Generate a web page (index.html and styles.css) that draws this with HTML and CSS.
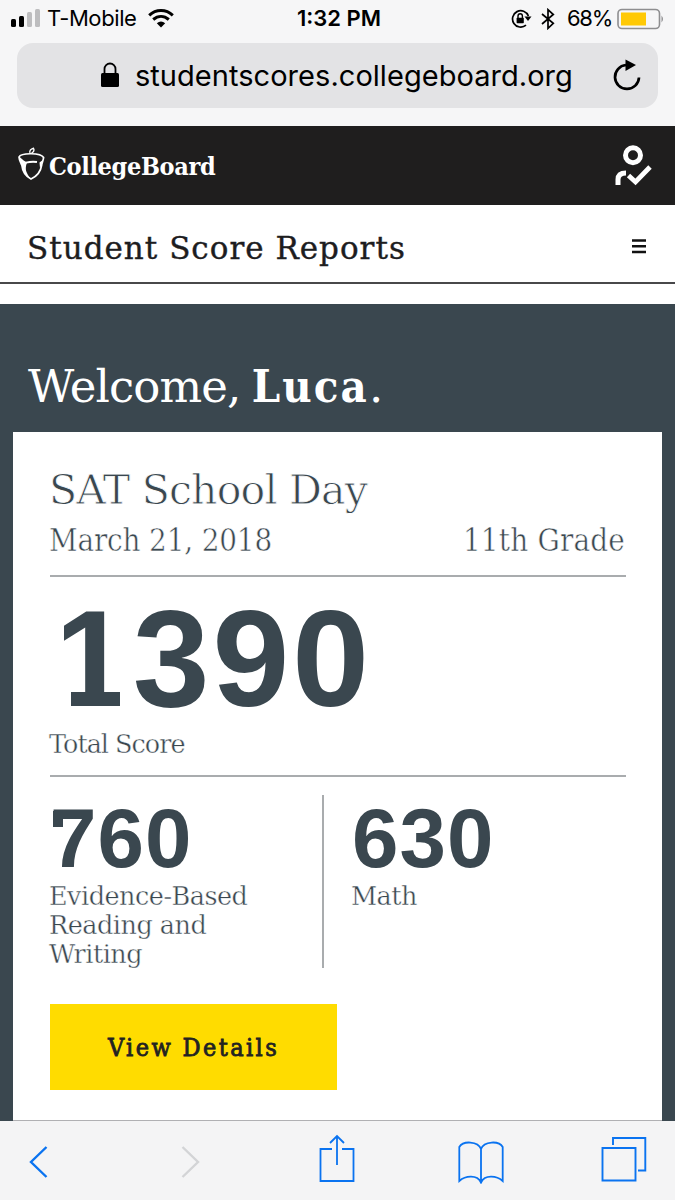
FILE: index.html
```html
<!DOCTYPE html>
<html lang="en">
<head>
<meta charset="utf-8">
<title>Student Score Reports</title>
<link rel="stylesheet" href="styles.css">
</head>
<body>
<div class="screen">
  <header class="browser">
    <div class="status">
      <div class="status-left">
        <svg class="signal" width="32" height="20" viewBox="0 0 32 20"><rect x="1" y="11" width="5" height="8" rx="1.5"/><rect x="9" y="8" width="5" height="11" rx="1.5"/><g fill="#bdbdbf"><rect x="17" y="4" width="5" height="15" rx="1.5"/><rect x="25" y="1" width="5" height="18" rx="1.5"/></g></svg>
        <span class="carrier">T-Mobile</span>
        <svg width="26" height="20" viewBox="0 0 26 20"><g fill="none" stroke="#000" stroke-width="3"><path d="M1.2 7.3C8 .9 18 .9 24.8 7.3"/><path d="M5.2 11.5C10 7.4 16 7.4 20.8 11.5"/></g><path d="M8.8 15.2Q13 11.7 17.2 15.2L13 19.4Z"/></svg>
      </div>
      <span class="clock">1:32 PM</span>
      <div class="status-right">
        <svg class="rotation" width="21" height="20" viewBox="0 0 21 20"><path d="M17.4 7A8.2 8.2 0 1 0 15 16.2" fill="none" stroke="#000" stroke-width="1.7"/><path d="M13.5 7.5H20.5L17 12Z"/><rect x="5.6" y="8.8" width="7.2" height="5.4" rx=".6"/><path d="M7 9V7a2.2 2.2 0 0 1 4.4 0V9" fill="none" stroke="#000" stroke-width="1.4"/></svg>
        <svg class="bluetooth" width="14" height="22" viewBox="0 0 14 22"><path d="M1 6L12.3 15.3L7 20.3V1.7L12.3 6.5L1 16" fill="none" stroke="#000" stroke-width="1.7"/></svg>
        <span class="percent">68%</span>
        <svg width="48" height="22" viewBox="0 0 48 22"><rect x="1" y="1.5" width="41.5" height="19" rx="4" fill="none" stroke="#8e8e90" stroke-width="1.6"/><rect x="4" y="4.5" width="25" height="13" fill="#ffc905"/><path d="M44.5 7.5Q47.5 11 44.5 14.5Z" fill="#8e8e90"/></svg>
      </div>
    </div>
    <div class="address">
      <svg class="lock" width="20" height="26" viewBox="0 0 20 26"><rect x="1" y="11" width="18" height="14" rx="1.5"/><path d="M4.5 12V7a5.5 5.5 0 0 1 11 0V12" fill="none" stroke="#000" stroke-width="1.8"/></svg>
      <span class="url">studentscores.collegeboard.org</span>
      <svg class="reload" width="30" height="34" viewBox="0 0 30 34"><path d="M14 6A12 12 0 1 0 27 18.5" fill="none" stroke="#000" stroke-width="2.7"/><path d="M13.5.5V12L24 6Z"/></svg>
    </div>
  </header>
  <div class="brand">
    <div class="logo">
      <svg width="28" height="36" viewBox="0 0 28 36"><g fill="none" stroke="#fff" stroke-width="1.7"><path d="M1 10C3 5.6 23 5.6 25.6 10.5C25.4 13 24 15.5 23.7 18C22.8 24 18.5 29.5 13 32C8 29.5 4.5 25 3.8 18C2.5 15.5 1 13 1 10Z"/><path d="M8 15.6C12 14.6 16 14.5 19 15" stroke-width="1.9"/><path d="M12 6.5C11 3.5 13 2 15.5 1.2C16.5 3 15.5 5 13.5 6.3" stroke-width="1.3"/></g><path fill="#fff" d="M1 9.5C3 10.5 5 14 9.5 15.2C8 17 7.2 22 8.5 25C10 29 12 30.5 13 32C8 30 4.5 25 3.8 18C2.5 15.5 1 13 1 9.5ZM21.5 15.5L24.7 13L23.7 18L22 21Z"/></svg>
      <span class="logo-name">CollegeBoard</span>
    </div>
    <svg class="account" width="38" height="42" viewBox="0 0 38 42"><g fill="none" stroke="#fff" stroke-width="5"><circle cx="19" cy="11.3" r="7.5"/><path d="M4 41V35.5Q4 29 12 29"/><path d="M14.5 31.5L21.5 38L36 23" stroke-width="4.8"/></g></svg>
  </div>
  <div class="report-bar">
    <h1 class="report-title">Student Score Reports</h1>
    <svg class="menu" width="14" height="15" viewBox="0 0 14 15"><path d="M0 1.5H14M0 7.3H14M0 13H14" stroke="#111" stroke-width="2.6"/></svg>
  </div>
  <main class="content">
    <h2 class="welcome">Welcome, <b class="name">Luca</b>.</h2>
    <section class="card">
      <h3 class="exam">SAT School Day</h3>
      <div class="meta"><span class="date">March 21, 2018</span><span class="grade">11th Grade</span></div>
      <div class="total">
        <div class="total-number"><span class="one">1</span>390</div>
        <div class="label total-label">Total Score</div>
      </div>
      <div class="sections">
        <div class="section reading"><div class="number"><span class="seven">7</span>60</div><div class="label">Evidence-Based<br>Reading and<br>Writing</div></div>
        <div class="section math"><div class="number">630</div><div class="label">Math</div></div>
      </div>
      <a class="details"><span class="details-text">View Details</span></a>
    </section>
  </main>
  <nav class="toolbar">
    <svg class="tool-back" width="20" height="34" viewBox="0 0 20 34"><path d="M17.5 2L2 17L17.5 32" fill="none" stroke="#0a73f0" stroke-width="2.4"/></svg>
    <svg class="tool-forward" width="20" height="34" viewBox="0 0 20 34"><path d="M2.5 2L18 17L2.5 32" fill="none" stroke="#d3d4d6" stroke-width="2.4"/></svg>
    <svg class="tool-share" width="36" height="48" viewBox="0 0 36 48"><path d="M13 15H1.5V47H34.5V15H23M18 31V2M11 9L18 2L25 9" fill="none" stroke="#0a73f0" stroke-width="1.8"/></svg>
    <svg class="tool-book" width="46" height="44" viewBox="0 0 46 44"><path d="M23 9C20 1 5 .5 1.3 7V41C7 36 19 34 23 42.5C27 34 39 36 44.7 41V7C41 .5 26 1 23 9V42" fill="none" stroke="#0a73f0" stroke-width="1.8"/></svg>
    <svg class="tool-tabs" width="46" height="46" viewBox="0 0 46 46"><path d="M1.5 12H34.5V44.5H1.5ZM12 9V2H44.3V34.5H37" fill="none" stroke="#0a73f0" stroke-width="1.9"/></svg>
  </nav>
</div>
</body>
</html>
```
FILE: styles.css
```css
* { box-sizing: border-box; }
body { margin: 0; }
svg { display: block; flex: none; }
h1, h2, h3 { margin: 0; font-weight: 400; }
.screen { width: 675px; height: 1200px; overflow: hidden; display: flex; flex-direction: column; background: #fff; font-family: "DejaVu Serif Condensed", "DejaVu Serif", serif; font-stretch: condensed; white-space: nowrap; }
.browser { height: 126px; flex: none; background: #f6f6f7; color: #000; font-family: Inter, "Liberation Sans", sans-serif; font-stretch: normal; }
.status { height: 43px; padding: 0 10px; display: grid; grid-template-columns: 1fr auto 1fr; align-items: start; font-size: 22px; line-height: 37px; }
.status-left, .status-right { display: flex; }
.status-left svg { margin-top: 8px; }
.carrier { width: 93px; margin: 0 8px 0 5px; letter-spacing: -.4px; }
.clock { font-weight: 600; margin-left: 3px; }
.status-right { justify-content: flex-end; }
.rotation { margin: 9px 9px 0 0; }
.bluetooth { margin: 8px 12px 0 0; }
.percent { margin-right: 5px; letter-spacing: -1.3px; }
.status-right svg:last-child { margin-top: 8px; }
.address { height: 65px; margin: 0 17px; padding-left: 83px; display: flex; background: #e3e3e5; border-radius: 16px; line-height: 66px; font-size: 29px; }
.lock { margin-top: 19px; }
.url { width: 438px; margin: 0 39px 0 15px; letter-spacing: .04px; }
.reload { margin-top: 16px; }
.brand { height: 79px; flex: none; padding: 0 23px 0 18px; display: flex; justify-content: space-between; background: #1f1e1e; color: #fff; }
.logo { display: flex; gap: 3px; padding-top: 21px; }
.logo-name { font-size: 25px; line-height: 40px; font-weight: 700; letter-spacing: -.35px; }
.account { margin-top: 18px; }
.report-bar { height: 79px; flex: none; border-bottom: 2px solid #48484a; padding: 0 29px 0 27px; display: flex; justify-content: space-between; color: #1d1d1f; }
.report-title { font-family: "DejaVu Serif", serif; font-stretch: normal; font-size: 31px; line-height: 86px; letter-spacing: 1px; -webkit-text-stroke: .4px #1d1d1f; }
.menu { margin-top: 34px; }
.content { height: 817px; flex: none; margin-top: 20px; padding: 55px 13px 0; background: #3a474f; }
.welcome { height: 73px; padding-left: 15px; color: #fff; font-family: "DejaVu Serif", serif; font-stretch: normal; font-size: 45px; line-height: 55px; letter-spacing: -.9px; word-spacing: -2px; }
.name { font-family: "DejaVu Serif Condensed", "DejaVu Serif", serif; font-stretch: condensed; font-weight: 700; letter-spacing: 2.1px; }
.card { height: 689px; padding: 34px 36px 0 37px; background: #fff; border-bottom: 1px solid #b0b0b3; color: #3a474f; }
.exam { height: 50px; margin-left: -1px; font-size: 41px; line-height: 48px; font-family: "DejaVu Serif", serif; font-stretch: normal; letter-spacing: -.8px; -webkit-text-stroke: .8px #fff; }
.meta { height: 61px; display: flex; justify-content: space-between; border-bottom: 2px solid #a9acae; font-size: 31px; line-height: 48px; -webkit-text-stroke: .5px #fff; }
.date { margin-left: -1px; letter-spacing: -.15px; }
.grade { margin-right: 1px; letter-spacing: .2px; }
.total { height: 200px; padding-top: 14px; border-bottom: 2px solid #a9acae; }
.total-number { height: 136px; padding-left: 3px; font: 700 138px/135px "Liberation Sans", Arial, sans-serif; letter-spacing: 3px; }
.one { display: inline-block; clip-path: polygon(11px 0, 67px 0, 67px 135px, 18px 135px, 18px 98px, 11px 98px); }
.label { margin-left: -1px; font-family: "DejaVu Serif", serif; font-stretch: normal; font-size: 25.5px; line-height: 29px; letter-spacing: -.5px; -webkit-text-stroke: .4px #fff; }
.total-label { line-height: 35px; letter-spacing: -1px; }
.sections { height: 209px; margin-top: 18px; display: flex; }
.section { height: 173px; }
.reading { width: 274px; border-right: 2px solid #a9acae; }
.math { padding-left: 28px; }
.number { height: 87px; font: 700 83.5px/86px "Liberation Sans", Arial, sans-serif; letter-spacing: 1.1px; }
.seven { position: relative; }
.seven::before { content: ""; position: absolute; left: 3px; top: 20px; width: 10px; height: 16px; background: #3a474f; }
.details { width: 287px; height: 86px; display: flex; justify-content: center; background: #ffdc00; color: #222; }
.details-text { font-size: 25px; line-height: 87px; letter-spacing: 2.4px; -webkit-text-stroke: .8px #222; }
.toolbar { flex: 1; display: flex; align-items: flex-start; background: #f4f4f5; }
.tool-back { margin: 24px 0 0 29px; }
.tool-forward { margin: 24px 0 0 131px; }
.tool-share { margin: 13px 0 0 119px; }
.tool-book { margin: 19px 0 0 103px; }
.tool-tabs { margin: 15px 0 0 97px; }
```
